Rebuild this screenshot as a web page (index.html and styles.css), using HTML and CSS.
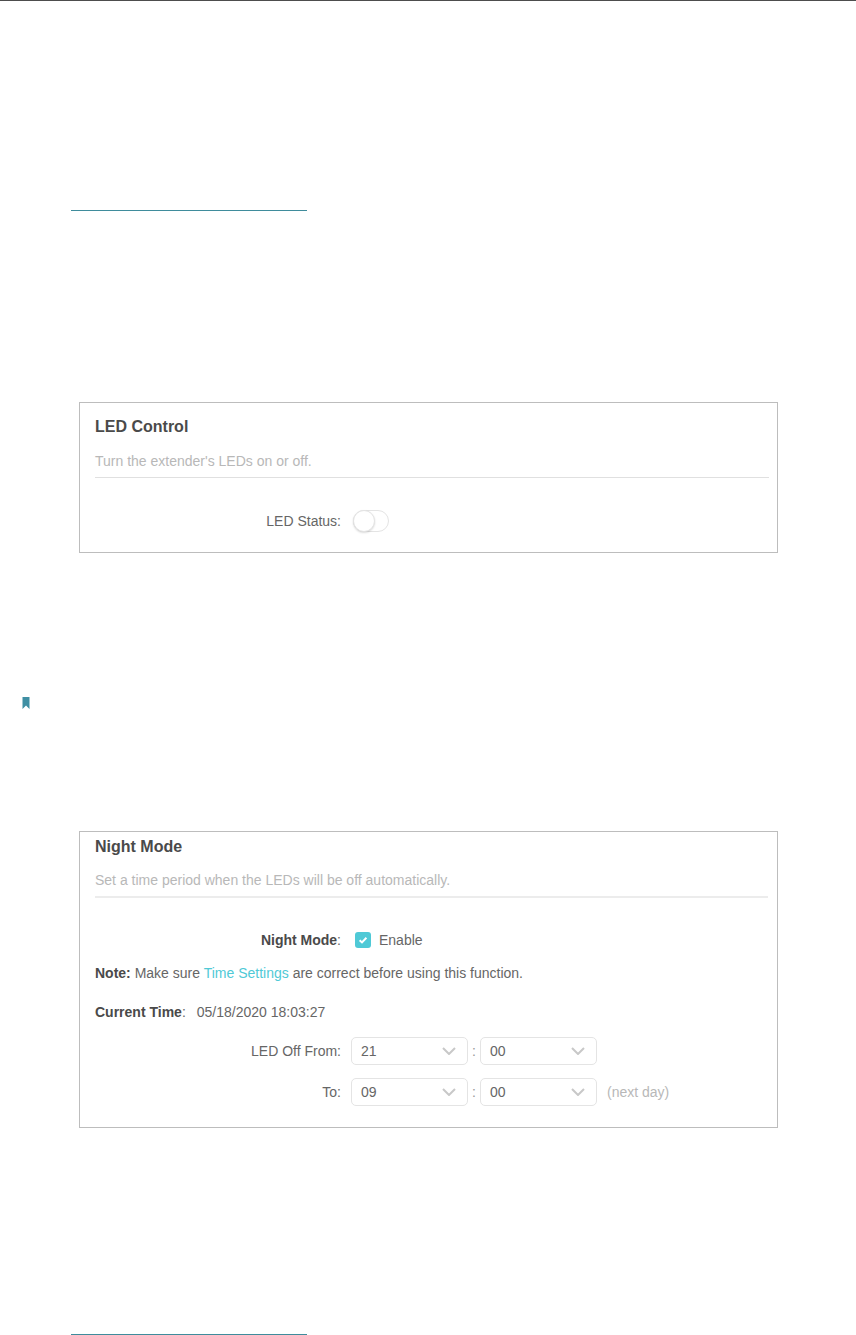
FILE: index.html
```html
<!DOCTYPE html>
<html lang="en">
<head>
<meta charset="utf-8">
<title>LED Control</title>
<link rel="stylesheet" href="styles.css">
</head>
<body>
<div class="top-rule"></div>
<div class="link-rule first"></div>

<section class="card led-card">
  <h2 class="card-title">LED Control</h2>
  <p class="card-desc">Turn the extender's LEDs on or off.</p>
  <div class="divider"></div>
  <div class="row led-row">
    <span class="label">LED Status:</span>
    <span class="toggle"><span class="knob"></span></span>
  </div>
</section>

<svg class="bookmark" width="8" height="12" viewBox="0 0 8 12"><path d="M0.5 0H7.5V12L4 8.6L0.5 12Z" fill="#3f8fa3"/></svg>

<section class="card night-card">
  <h2 class="card-title">Night Mode</h2>
  <p class="card-desc">Set a time period when the LEDs will be off automatically.</p>
  <div class="divider"></div>
  <div class="row night-row">
    <span class="label"><b>Night Mode</b>:</span>
    <span class="checkbox">
      <svg width="16" height="16" viewBox="0 0 16 16"><rect width="16" height="16" rx="3" fill="#4fc9d6"/><path d="M4.6 8.2L7 10.4L11.4 5.8" fill="none" stroke="#fff" stroke-width="2"/></svg>
    </span>
    <span class="enable">Enable</span>
  </div>
  <p class="note"><b>Note:</b> Make sure <span class="link">Time Settings</span> are correct before using this function.</p>
  <p class="current"><b>Current Time</b>:<span class="time">05/18/2020 18:03:27</span></p>
  <div class="row time-row from-row">
    <span class="label">LED Off From:</span>
    <span class="select">21<svg class="chev" width="14" height="8" viewBox="0 0 14 8"><path d="M1 1L7 7L13 1" fill="none" stroke="#c8c8c8" stroke-width="2"/></svg></span>
    <span class="colon">:</span>
    <span class="select">00<svg class="chev" width="14" height="8" viewBox="0 0 14 8"><path d="M1 1L7 7L13 1" fill="none" stroke="#c8c8c8" stroke-width="2"/></svg></span>
  </div>
  <div class="row time-row to-row">
    <span class="label">To:</span>
    <span class="select">09<svg class="chev" width="14" height="8" viewBox="0 0 14 8"><path d="M1 1L7 7L13 1" fill="none" stroke="#c8c8c8" stroke-width="2"/></svg></span>
    <span class="colon">:</span>
    <span class="select">00<svg class="chev" width="14" height="8" viewBox="0 0 14 8"><path d="M1 1L7 7L13 1" fill="none" stroke="#c8c8c8" stroke-width="2"/></svg></span>
    <span class="hint">(next day)</span>
  </div>
</section>

<div class="link-rule last"></div>
</body>
</html>
```

FILE: styles.css
```css
html, body {
  margin: 0;
  padding: 0;
  background: #fff;
}
body {
  width: 856px;
  height: 1335px;
  overflow: hidden;
  font-family: "Liberation Sans", Arial, sans-serif;
  font-size: 14px;
  color: #666;
}
.top-rule {
  height: 1px;
  background: #4d4d4d;
}
.link-rule {
  width: 236px;
  height: 1px;
  margin-left: 71px;
  background: #3f8c9c;
}
.link-rule.first { margin-top: 209px; }
.link-rule.last { margin-top: 206px; }

.card {
  box-sizing: border-box;
  width: 699px;
  margin-left: 79px;
  padding: 0 9px 0 15px;
  border: 1px solid #bdbdbd;
}
.led-card {
  height: 151px;
  margin-top: 191px;
  padding: 15px 8px 0 15px;
}
.night-card {
  height: 297px;
  margin-top: 122px;
  padding-top: 6px;
}
.bookmark {
  display: block;
  margin: 144px 0 0 22px;
}
.card-title {
  margin: 0;
  font-size: 16px;
  line-height: 18px;
  font-weight: 700;
  color: #4a4a4a;
}
.card-desc {
  margin: 17px 0 0;
  line-height: 16px;
  color: #b8b8b8;
}
.night-card .card-desc { margin-top: 16px; }
.divider {
  height: 1px;
  margin-top: 8px;
  background: #e0e0e0;
}
.night-card .divider {
  height: 2px;
  background: #ececec;
}
.row {
  display: flex;
  align-items: center;
}
.label {
  box-sizing: border-box;
  width: 246px;
  text-align: right;
}
.label b, .note b, .current b { color: #4a4a4a; }
.led-row {
  margin-top: 32px;
  height: 22px;
}
.toggle {
  position: relative;
  box-sizing: border-box;
  width: 36px;
  height: 22px;
  margin-left: 12px;
  border: 1px solid #e4e4e4;
  border-radius: 11px;
  background: #fff;
}
.knob {
  position: absolute;
  left: -1px;
  top: -1px;
  box-sizing: border-box;
  width: 22px;
  height: 22px;
  border: 1px solid #e4e4e4;
  border-radius: 50%;
  background: #fff;
  box-shadow: 0 1px 2px rgba(0, 0, 0, .14);
}
.night-row {
  margin-top: 34px;
  height: 16px;
}
.checkbox {
  display: flex;
  margin-left: 14px;
}
.enable { margin-left: 8px; }
.note {
  margin: 17px 0 0;
  line-height: 16px;
}
.link { color: #4fc9d6; }
.current {
  margin: 23px 0 0;
  line-height: 16px;
}
.time { margin-left: 11px; }
.time-row { height: 28px; }
.from-row { margin-top: 17px; }
.to-row { margin-top: 13px; }
.select {
  box-sizing: border-box;
  display: flex;
  align-items: center;
  justify-content: space-between;
  width: 117px;
  height: 28px;
  padding: 0 11px 0 9px;
  border: 1px solid #e4e4e4;
  border-radius: 5px;
}
.time-row .label + .select { margin-left: 10px; }
.colon {
  width: 12px;
  text-align: center;
  color: #999;
}
.hint {
  margin-left: 10px;
  color: #b8b8b8;
}
```
